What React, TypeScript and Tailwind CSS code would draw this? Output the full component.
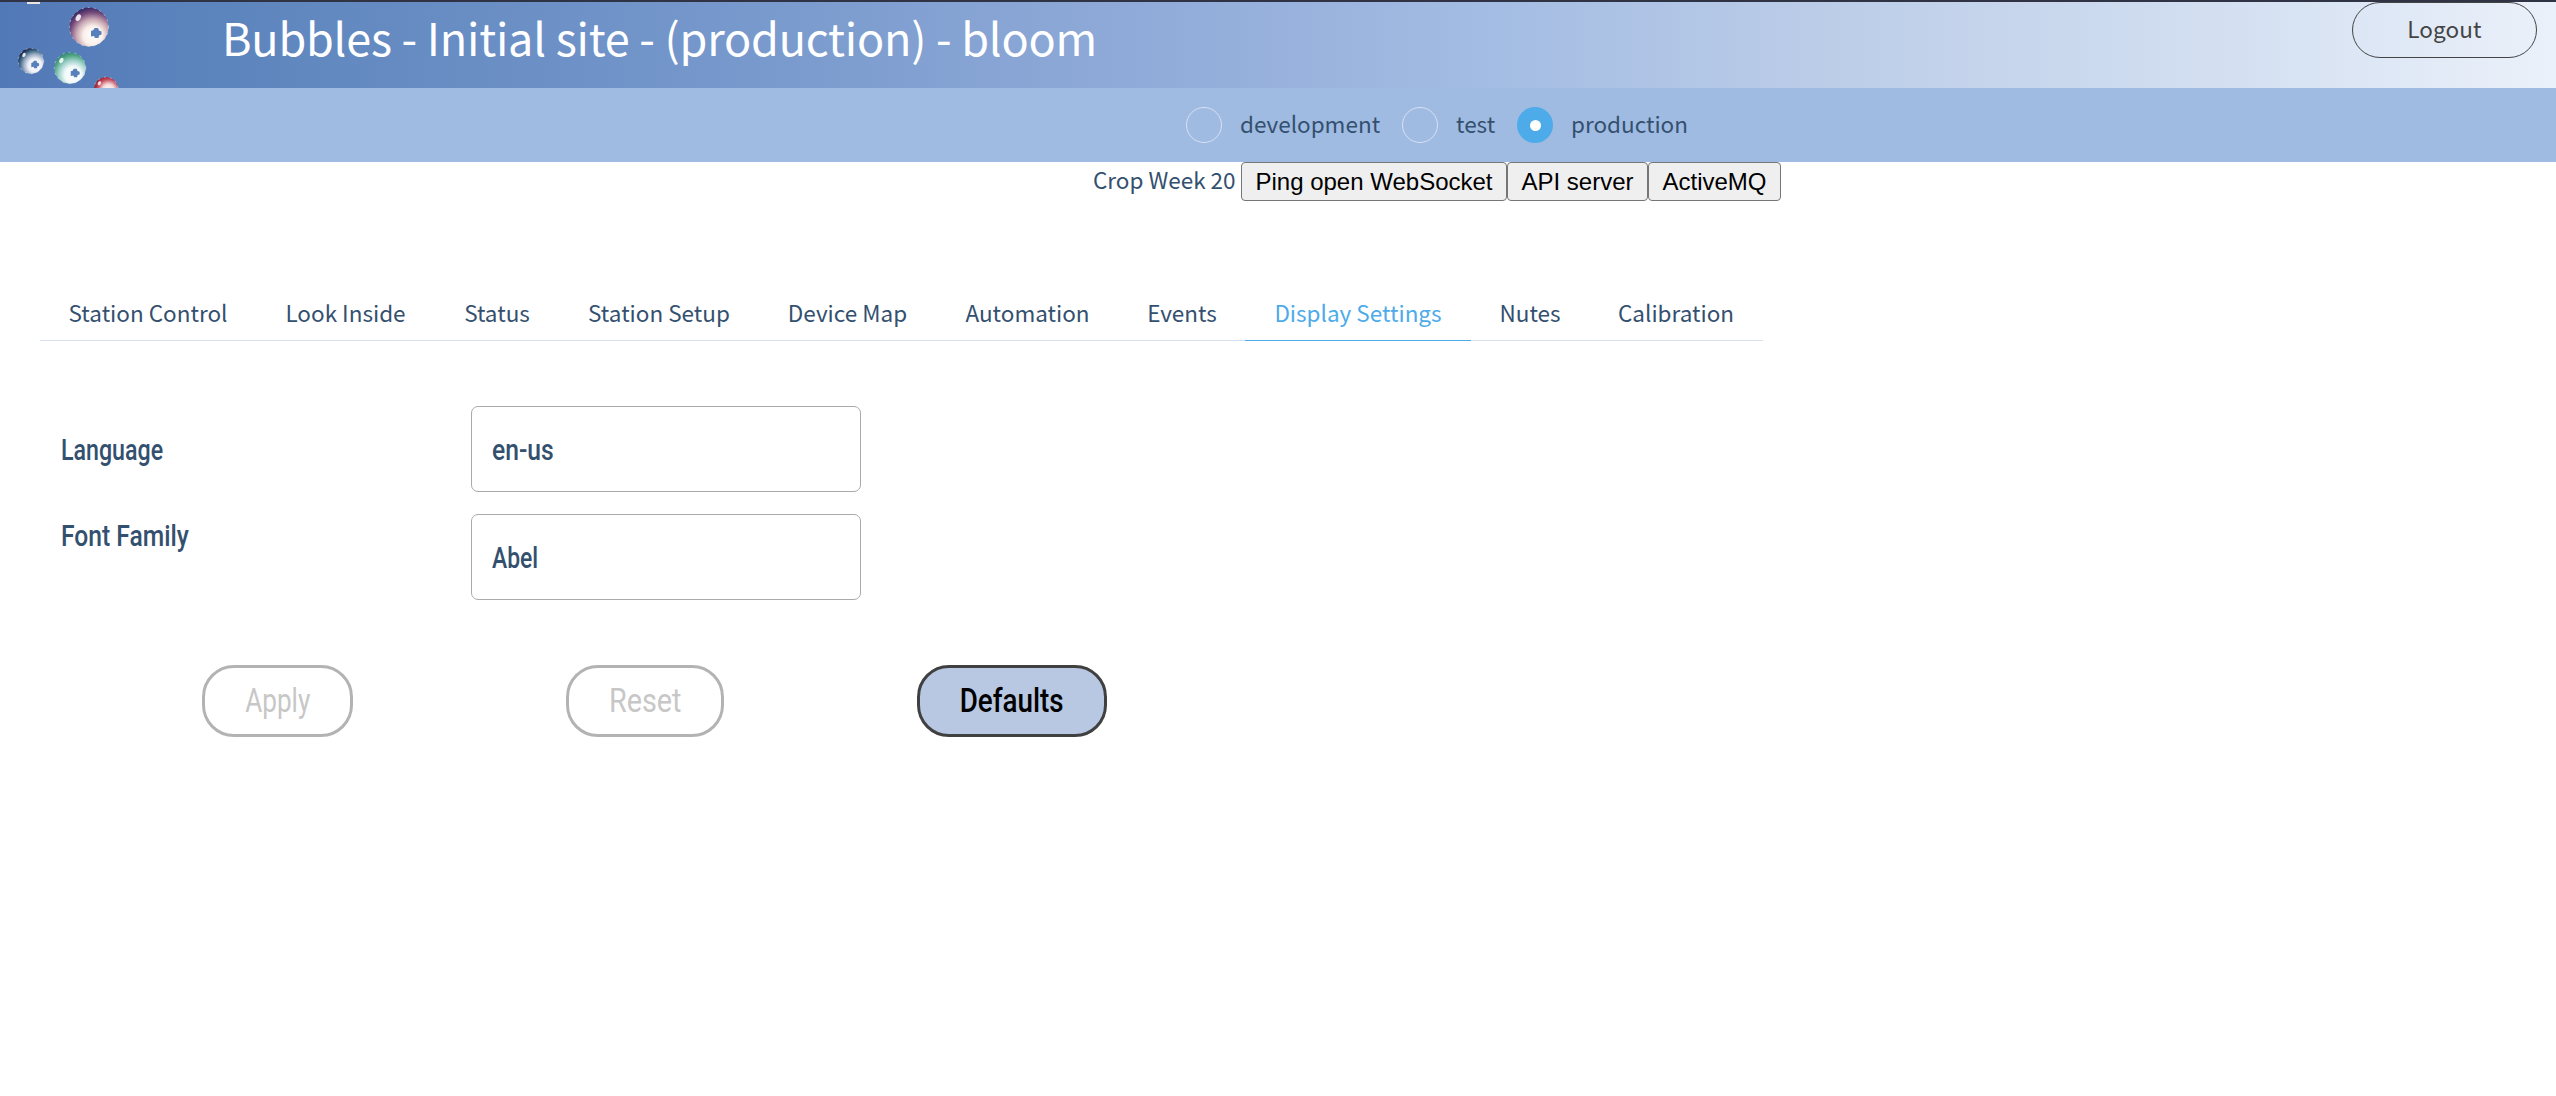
import React from "react";

const sans = "font-['Noto_Sans_CJK_SC','Noto_Sans',sans-serif]";
const narrow = "font-['Roboto',sans-serif]";

const tabs = [
  { label: "Station Control", box: "w-[216px]" },
  { label: "Look Inside", box: "w-[179px]" },
  { label: "Status", box: "w-[124px]" },
  { label: "Station Setup", box: "w-[200px]" },
  { label: "Device Map", box: "w-[177px]" },
  { label: "Automation", box: "w-[183px]" },
  { label: "Events", box: "w-[126px]" },
  { label: "Display Settings", box: "w-[226px]", active: true },
  { label: "Nutes", box: "w-[118px]" },
  { label: "Calibration", box: "w-[174px]" },
];

const plainButton =
  "h-[39px] whitespace-nowrap rounded-[4px] border-[1.5px] border-[#767676] bg-[#efefef] font-['Liberation_Sans',Arial,sans-serif] text-[24px] leading-[36px] text-black";

const hole = "M-1.5 -5 L2 -5 L3 -2.5 L5.5 -1.5 L5.5 1.5 L3 2.5 L2.5 5 L-1 5 L-2 3 L-5 3.5 L-5 -2 L-2.5 -3 Z";

function Bubble({ cx, cy, r, fill, hx, hy, hs }: { cx: number; cy: number; r: number; fill: string; hx: number; hy: number; hs: number }) {
  return (
    <g>
      <circle cx={cx} cy={cy} r={r} fill={fill} />
      <circle cx={cx} cy={cy} r={r} fill="none" stroke="#f4f2f6" strokeWidth="0.8" strokeDasharray="2 4" opacity="0.6" />
      <ellipse cx={cx - r * 0.55} cy={cy - r * 0.48} rx={r * 0.12} ry={r * 0.18} fill="#fff" opacity="0.85" transform={`rotate(30 ${cx - r * 0.55} ${cy - r * 0.48})`} />
      <path d={hole} transform={`translate(${hx} ${hy}) scale(${hs})`} fill="#5880bb" />
    </g>
  );
}

function Bubbles() {
  return (
    <svg className="absolute left-0 top-0 h-[86px] w-[130px]" viewBox="0 2 130 86">
      <defs>
        <radialGradient id="b1" cx="0.6" cy="0.72" r="0.76">
          <stop offset="0" stopColor="#ffffff" />
          <stop offset="0.32" stopColor="#fbf0ea" />
          <stop offset="0.55" stopColor="#c9a9b4" />
          <stop offset="0.78" stopColor="#74497a" />
          <stop offset="1" stopColor="#29205c" />
        </radialGradient>
        <radialGradient id="b2" cx="0.66" cy="0.68" r="0.74">
          <stop offset="0" stopColor="#ffffff" />
          <stop offset="0.36" stopColor="#eef0f8" />
          <stop offset="0.6" stopColor="#9dadc6" />
          <stop offset="0.8" stopColor="#3f6a85" />
          <stop offset="1" stopColor="#17183c" />
        </radialGradient>
        <radialGradient id="b3" cx="0.6" cy="0.72" r="0.76">
          <stop offset="0" stopColor="#ffffff" />
          <stop offset="0.35" stopColor="#f2f9fa" />
          <stop offset="0.6" stopColor="#9fd2cb" />
          <stop offset="0.82" stopColor="#4fa483" />
          <stop offset="1" stopColor="#2f7f78" />
        </radialGradient>
        <radialGradient id="b4" cx="0.6" cy="0.55" r="0.62">
          <stop offset="0" stopColor="#ffffff" />
          <stop offset="0.4" stopColor="#f6d9d8" />
          <stop offset="0.75" stopColor="#bf4459" />
          <stop offset="1" stopColor="#8c2430" />
        </radialGradient>
      </defs>
      <rect x="27" y="2" width="13" height="2" fill="#e8e6e2" />
      <Bubble cx={89} cy={27} r={19.5} fill="url(#b1)" hx={96} hy={33} hs={1} />
      <Bubble cx={31} cy={61} r={12.7} fill="url(#b2)" hx={35} hy={64.5} hs={0.75} />
      <Bubble cx={70} cy={68} r={15.7} fill="url(#b3)" hx={75} hy={73} hs={0.85} />
      <Bubble cx={106} cy={89} r={12} fill="url(#b4)" hx={110} hy={96} hs={0.7} />
    </svg>
  );
}

function Radio({ label, checked, gap }: { label: string; checked?: boolean; gap: string }) {
  return (
    <label className={`flex items-center ${gap}`}>
      <span
        className={
          checked
            ? "flex size-9 items-center justify-center rounded-full bg-[#4dabe9]"
            : "size-9 rounded-full border border-[#d9e1f2]"
        }
      >
        {checked && <span className="size-[11px] rounded-full bg-white" />}
      </span>
      <span className="ml-[18px] whitespace-nowrap pb-[4px] text-[#34506f]">{label}</span>
    </label>
  );
}

export default function App() {
  return (
    <div className={`h-[1096px] w-[2556px] overflow-hidden bg-white text-[22.5px] leading-8 text-[#34506f] ${sans}`}>
      <header className="relative flex h-[88px] items-start justify-between border-t-2 border-[#2f3343] bg-[linear-gradient(90deg,#5279b7_0%,#5d85bd_9%,#7194c9_25%,#8faad8_44%,#a3bce3_58%,#b9cbe7_70%,#d8e3f3_90%,#ebf1fa_100%)]">
        <Bubbles />
        <h1 className="ml-[222px] mt-[5px] whitespace-nowrap text-[45px] leading-[60px] tracking-[-0.22px] text-white">
          Bubbles - Initial site - (production) - bloom
        </h1>
        <button className="mr-[19px] flex h-[56px] w-[185px] items-center justify-center rounded-[28px] border border-[#444] pb-[4px] text-[22.5px] tracking-[0.1px] text-[#444]">
          Logout
        </button>
      </header>
      <div className="flex h-[74px] items-center bg-[#a0bbe2] pl-[1186px]">
        <Radio label="development" gap="w-[216px]" />
        <Radio label="test" gap="w-[115px]" />
        <Radio label="production" checked gap="" />
      </div>
      <div className="flex h-[39px] pl-[1093px]">
        <span className="w-[148px] whitespace-nowrap pt-px">Crop Week 20</span>
        <button className={`w-[266px] ${plainButton}`}>Ping open WebSocket</button>
        <button className={`w-[141px] ${plainButton}`}>API server</button>
        <button className={`w-[133px] ${plainButton}`}>ActiveMQ</button>
      </div>
      <nav className="ml-10 mt-[81px] flex h-[59px] w-[1723px]">
        {tabs.map((t) => (
          <a
            key={t.label}
            className={`flex shrink-0 items-center justify-center whitespace-nowrap border-b pt-px ${t.box} ${
              t.active ? "border-[#4dabe9] text-[#4dabe9]" : "border-[#d8dfee]"
            }`}
          >
            {t.label}
          </a>
        ))}
      </nav>
      <main className={`text-[29px] ${narrow}`}>
        <div className="mt-[65px] flex h-[108px] pl-[61px]">
          <div className="w-[410px] pt-[28px]">
            <span className="inline-block origin-left scale-x-[0.8] font-medium">Language</span>
          </div>
          <div className="flex h-[86px] w-[390px] items-center rounded-[7px] border border-[#aaa] pl-[20px] pt-px">
            <span className="origin-left scale-x-[0.85] font-medium">en-us</span>
          </div>
        </div>
        <div className="flex h-[87px] pl-[61px]">
          <div className="w-[410px] pt-[6px]">
            <span className="inline-block origin-left scale-x-[0.85] font-medium">Font Family</span>
          </div>
          <div className="flex h-[86px] w-[390px] items-center rounded-[7px] border border-[#aaa] pl-[20px] pt-px">
            <span className="origin-left scale-x-[0.79] font-medium">Abel</span>
          </div>
        </div>
        <div className="mt-[64px] flex pl-[202px] text-[33.5px]">
          <button className="h-[72px] w-[151px] rounded-[32px] border-3 border-[#b3b3b3] text-[#c7c7c7]">
            <span className="inline-block scale-x-[0.78]">Apply</span>
          </button>
          <button className="ml-[213px] h-[72px] w-[158px] rounded-[32px] border-3 border-[#b3b3b3] text-[#c7c7c7]">
            <span className="inline-block scale-x-[0.86]">Reset</span>
          </button>
          <button className="ml-[193px] h-[72px] w-[190px] rounded-[32px] border-3 border-[#404040] bg-[#b8c8e3] text-black">
            <span className="inline-block scale-x-[0.83] font-medium">Defaults</span>
          </button>
        </div>
      </main>
    </div>
  );
}
